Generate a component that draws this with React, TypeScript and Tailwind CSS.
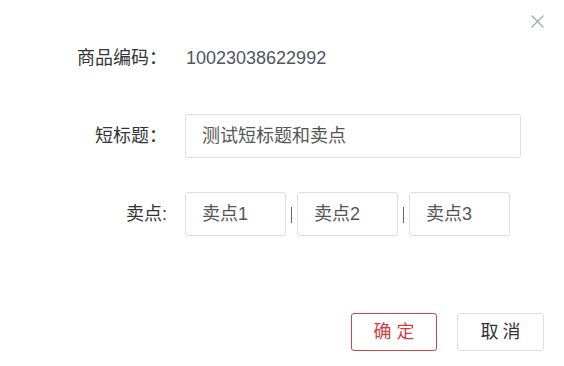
export default function App() {
  const points = ['卖点1', '卖点2', '卖点3'];

  return (
    <div className="relative w-[564px] h-[366px] bg-white text-[18px] text-[#333] font-['Liberation_Sans','Noto_Sans_CJK_SC',sans-serif]">
      <button className="absolute top-[14px] left-[530px] w-[15px] h-[15px] flex items-center justify-center">
        <svg width="15" height="15" viewBox="0 0 15 15" fill="none">
          <path d="M1.5 1.5 L13.5 13.5 M13.5 1.5 L1.5 13.5" stroke="#a3a8b0" strokeWidth="1.3" />
        </svg>
      </button>

      <div className="pt-[41px]">
        <div className="flex items-center h-[34px]">
          <div className="w-[167px] text-right">商品编码：</div>
          <div className="ml-[19px] text-[#4f5562]">10023038622992</div>
        </div>

        <div className="flex items-center h-[44px] mt-[39px]">
          <div className="w-[167px] text-right">短标题：</div>
          <div className="ml-[18px] w-[336px] h-[44px] border border-[#dcdfe6] rounded-[3px] flex items-center px-[16px] text-[#555]">
            测试短标题和卖点
          </div>
        </div>

        <div className="flex items-center h-[44px] mt-[34px]">
          <div className="w-[167px] text-right">卖点:</div>
          <div className="ml-[18px] flex items-center">
            {points.map((p, i) => (
              <div key={p} className="flex items-center">
                {i > 0 && (
                  <div className="w-[11px] flex justify-center pt-[2px]">
                    <div className="w-[1px] h-[16px] bg-[#666]" />
                  </div>
                )}
                <div className="w-[101px] h-[44px] border border-[#dcdfe6] rounded-[3px] flex items-center px-[16px] text-[#555]">
                  {p}
                </div>
              </div>
            ))}
          </div>
        </div>

        <div className="flex justify-end gap-[20px] pr-[20px] mt-[77px]">
          <button className="w-[86px] h-[38px] border border-[#c9474a] rounded-[3px] text-[#d63c3f] flex items-center justify-center gap-[5px]">
            <span>确</span><span>定</span>
          </button>
          <button className="w-[87px] h-[38px] border border-[#dcdfe6] rounded-[3px] text-[#333] flex items-center justify-center gap-[4px]">
            <span>取</span><span>消</span>
          </button>
        </div>
      </div>
    </div>
  );
}
